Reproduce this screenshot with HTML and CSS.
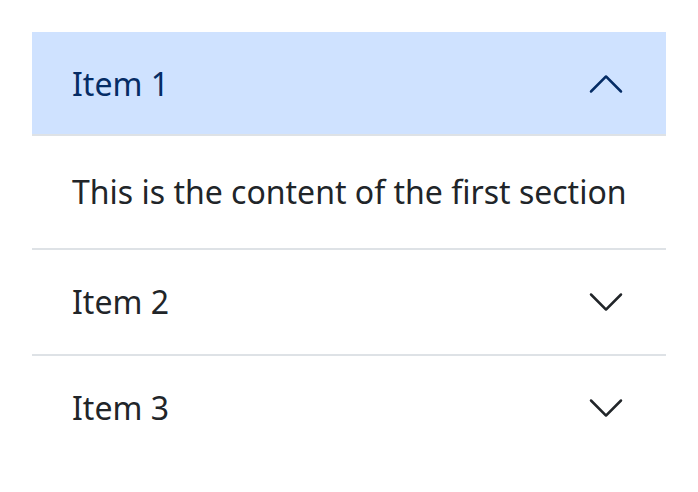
FILE: index.html
```html
<!DOCTYPE html>
<html>
<head>
<meta charset="utf-8">
<link rel="stylesheet" href="styles.css">
</head>
<body>
<div class="accordion">
  <div class="item">
    <button class="header active">
      <span class="title">Item 1</span>
      <svg class="chev" viewBox="0 0 16 16"><path fill="currentColor" d="M1.646 4.646a.5.5 0 0 1 .708 0L8 10.293l5.646-5.647a.5.5 0 0 1 .708.708l-6 6a.5.5 0 0 1-.708 0l-6-6a.5.5 0 0 1 0-.708z"/></svg>
    </button>
    <div class="body">This is the content of the first section</div>
  </div>
  <div class="item">
    <button class="header">
      <span class="title">Item 2</span>
      <svg class="chev" viewBox="0 0 16 16"><path fill="currentColor" d="M1.646 4.646a.5.5 0 0 1 .708 0L8 10.293l5.646-5.647a.5.5 0 0 1 .708.708l-6 6a.5.5 0 0 1-.708 0l-6-6a.5.5 0 0 1 0-.708z"/></svg>
    </button>
  </div>
  <div class="item last">
    <button class="header">
      <span class="title">Item 3</span>
      <svg class="chev" viewBox="0 0 16 16"><path fill="currentColor" d="M1.646 4.646a.5.5 0 0 1 .708 0L8 10.293l5.646-5.647a.5.5 0 0 1 .708.708l-6 6a.5.5 0 0 1-.708 0l-6-6a.5.5 0 0 1 0-.708z"/></svg>
    </button>
  </div>
</div>
</body>
</html>
```
FILE: styles.css
```css
html, body {
  margin: 0;
  padding: 0;
  background: #fff;
}
body {
  padding: 32px;
  font-family: "Noto Sans", sans-serif;
  color: #212529;
}
.accordion {
  display: flex;
  flex-direction: column;
}
.item {
  border-bottom: 2px solid #dee2e6;
}
.item.last {
  border-bottom: none;
}
.header {
  display: flex;
  align-items: center;
  justify-content: space-between;
  width: 100%;
  margin: 0;
  border: none;
  background: #fff;
  padding: 32px 40px;
  font-family: inherit;
  font-size: 32px;
  line-height: 38.4px;
  color: #212529;
  text-align: left;
}
.header.active {
  background: #cfe2ff;
  color: #052c65;
  box-shadow: inset 0 -2px 0 #dee2e6;
}
.chev {
  width: 40px;
  height: 40px;
  flex-shrink: 0;
}
.header.active .chev {
  transform: rotate(180deg);
}
.body {
  padding: 32px 40px;
  font-size: 32px;
  line-height: 48px;
  white-space: nowrap;
}
```
